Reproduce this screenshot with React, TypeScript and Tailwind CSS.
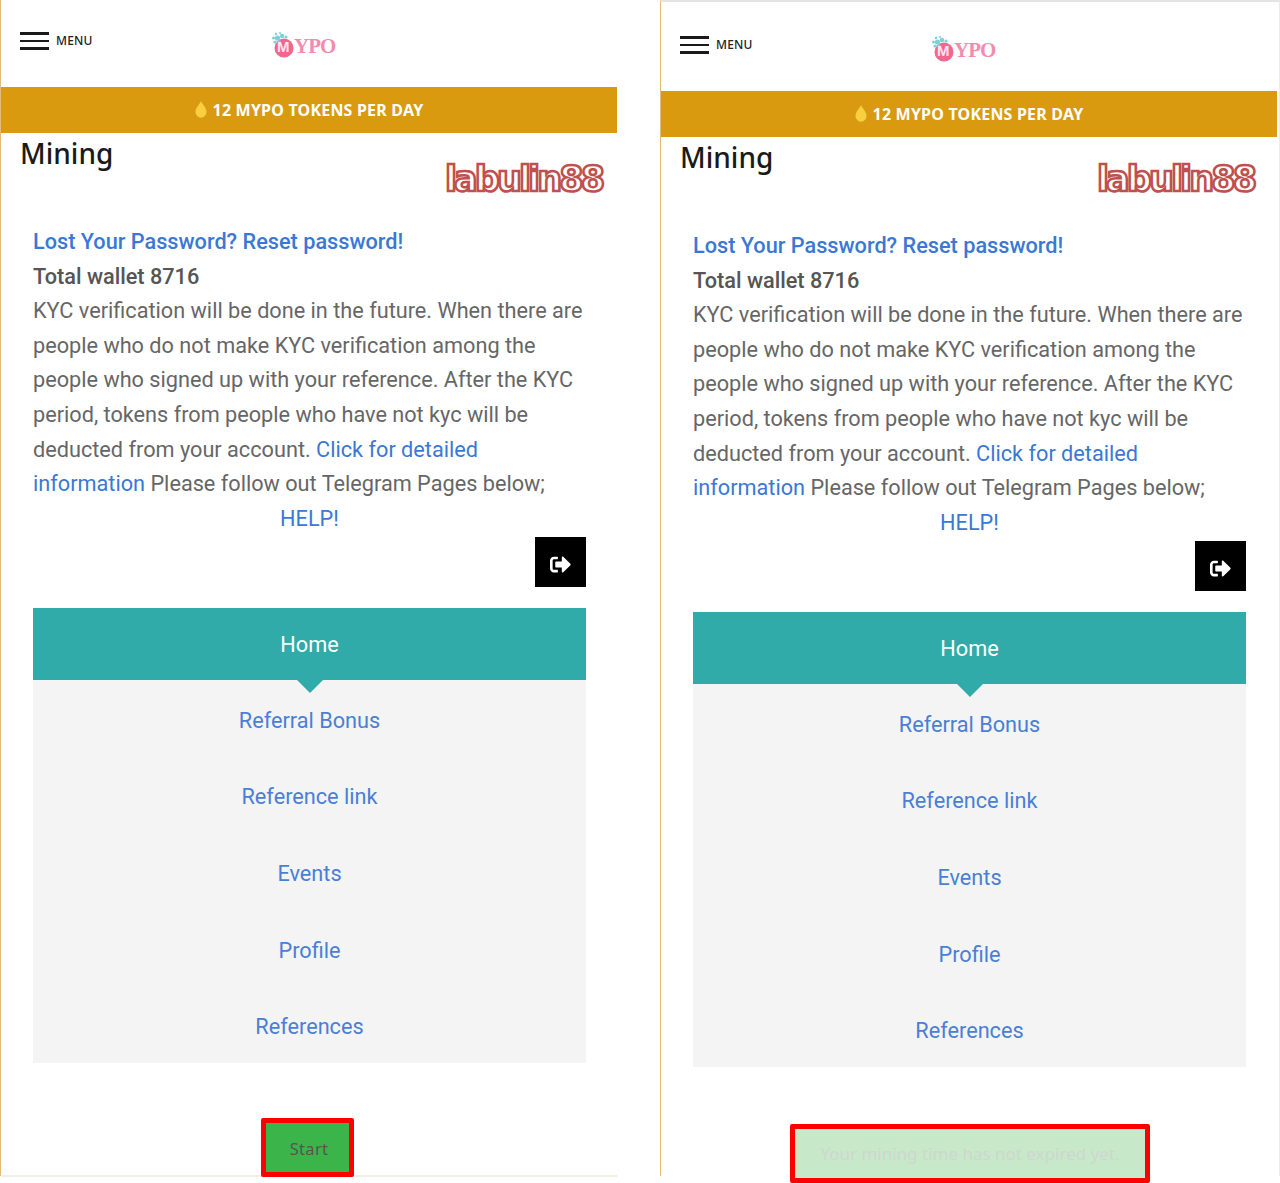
import { FaSignOutAlt } from "react-icons/fa";

const menuItems = ["Referral Bonus", "Reference link", "Events", "Profile", "References"];

function Logo() {
  return (
    <div className="relative flex items-center w-[64px] h-[28px]">
      <svg width="30" height="28" viewBox="0 0 30 28" className="shrink-0">
        <circle cx="13" cy="17" r="9.5" fill="#f4668f" />
        <g fill="#7fd0d6">
          <circle cx="5" cy="3" r="1.2" />
          <circle cx="9" cy="2" r="1" />
          <circle cx="2.5" cy="7" r="1.5" />
          <circle cx="6.5" cy="7" r="2.6" />
          <circle cx="11" cy="5" r="2.2" />
          <circle cx="15" cy="6" r="1.6" />
          <circle cx="4" cy="11" r="1.6" />
          <circle cx="8" cy="11" r="1.8" />
        </g>
      </svg>
      <span className="absolute left-[6px] top-[7px] text-[15px] font-bold leading-[18px] text-[#fbe6ee] font-['Liberation_Sans',sans-serif]">M</span>
      <span className="absolute left-[23px] top-[2px] text-[21px] font-bold leading-[26px] text-[#f58bb0] font-['Liberation_Serif',serif] tracking-[-1px]">YPO</span>
    </div>
  );
}

function Panel({ right }: { right?: boolean }) {
  return (
    <div className={right
      ? "relative w-[620px] h-[1176px] border-l border-r border-l-[#e3bd78] border-r-[#ececec] border-t-2 border-t-[#e4e4e4] pt-[2px]"
      : "relative w-[660px] h-[1176px] border-l border-[#e3bd78]"}>
      {!right && <div className="absolute left-0 top-[1175px] w-[616px] h-[2px] bg-[#f3eee2]" />}

      <div className="w-[616px] h-full">
        {/* Top bar */}
        <div className="relative h-[87px]">
          <div className="absolute left-[19px] top-[32px] flex items-center">
            <div className="flex flex-col gap-[5px] w-[29px]">
              <span className="h-[3px] bg-[#1a1a1a]" />
              <span className="h-[2px] bg-[#1a1a1a]" />
              <span className="h-[3px] bg-[#1a1a1a]" />
            </div>
            <span className="ml-[7px] -mt-[1px] text-[12px] font-medium text-[#222] tracking-[0.2px] font-['Noto_Sans',sans-serif]">MENU</span>
          </div>
          <div className="absolute left-[270px] top-[31px]">
            <Logo />
          </div>
        </div>

        {/* Banner */}
        <div className="flex items-center justify-center gap-[6px] h-[46px] pb-[1px] bg-[#d99a10] text-white font-['Noto_Sans',sans-serif] text-[16px] font-bold tracking-[0.2px]">
          <svg width="12" height="17" viewBox="0 0 12 17">
            <path d="M6 0C7 3 11.5 6.5 11.5 11A5.5 5.8 0 0 1 .5 11C.5 6.5 5 3 6 0Z" fill="#f7cf3f" />
          </svg>
          <span>12 MYPO TOKENS PER DAY</span>
        </div>

        {/* Title */}
        <div className="pl-[19px] h-[92px]">
          <h1 className="text-[28px] leading-[40px] font-medium text-[#1a1a1a] font-['Noto_Sans',sans-serif]">Mining</h1>
        </div>

        <div className="ml-[32px] w-[553px] font-['Roboto',sans-serif] text-[21.7px] leading-[34.6px] text-[#666]">
          <a className="block font-medium text-[#3a78d6]">Lost Your Password? Reset password!</a>
          <div className="font-medium text-[#555]">Total wallet 8716</div>
          <p>
            KYC verification will be done in the future. When there are people who do not make KYC verification among the people who signed up with your reference. After the KYC period, tokens from people who have not kyc will be deducted from your account.{" "}
            <a className="text-[#3a78d6]">Click for detailed information</a> Please follow out Telegram Pages below;
          </p>
          <a className="block text-center text-[#3a78d6]">HELP!</a>

          <div className="flex justify-end mt-[1px]">
            <button className="flex items-center justify-center w-[51px] h-[50px] pt-[5px] bg-black text-white">
              <FaSignOutAlt size={21} />
            </button>
          </div>

          {/* Menu */}
          <div className="mt-[21px] bg-[#f4f4f4]">
            <div className="relative flex items-center justify-center h-[72px] pt-[1px] bg-[#30aba9] text-white">
              Home
              <span className="absolute left-1/2 -ml-[13px] top-[72px] w-0 h-0 border-x-[13px] border-x-transparent border-t-[13px] border-t-[#30aba9]" />
            </div>
            {menuItems.map(item => (
              <div key={item} className="flex items-center justify-center h-[76.6px] pt-[5px] text-[21.7px] text-[#4a7fd6]">
                {item}
              </div>
            ))}
          </div>
        </div>

        {/* Action */}
        {right ? (
          <div className="relative flex justify-center -ml-[1px] w-[620px] mt-[57px]">
            <div className="flex items-center justify-center w-[360px] h-[59px] border-[5px] border-[#ff0000] rounded-[2px] bg-[#c7e9c9] text-[#cfd6cf] text-[17px] font-['Noto_Sans',sans-serif]">
              Your mining time has not expired yet.
            </div>
          </div>
        ) : (
          <div className="relative flex justify-center w-[612px] mt-[55px]">
            <button className="flex items-center justify-center w-[93px] h-[59px] pt-[4px] pl-[4px] border-[5px] border-[#ff0000] rounded-[2px] bg-[#3bb54a] text-[#555] text-[16.5px] tracking-[0.3px] font-['Noto_Sans',sans-serif]">
              Start
            </button>
          </div>
        )}
      </div>

      {/* Watermark */}
      <span className={right
        ? "absolute left-[436px] top-[155px] text-[35px] leading-[44px] font-bold text-white [-webkit-text-stroke:2.5px_#c0504d] font-['DejaVu_Sans',sans-serif] tracking-[-2.9px]"
        : "absolute left-[444px] top-[157px] text-[35px] leading-[44px] font-bold text-white [-webkit-text-stroke:2.5px_#c0504d] font-['DejaVu_Sans',sans-serif] tracking-[-2.9px]"}>
        labulin88
      </span>
    </div>
  );
}

export default function App() {
  return (
    <div className="flex w-[1280px] h-[1183px] bg-white overflow-hidden">
      <Panel />
      <Panel right />
    </div>
  );
}
